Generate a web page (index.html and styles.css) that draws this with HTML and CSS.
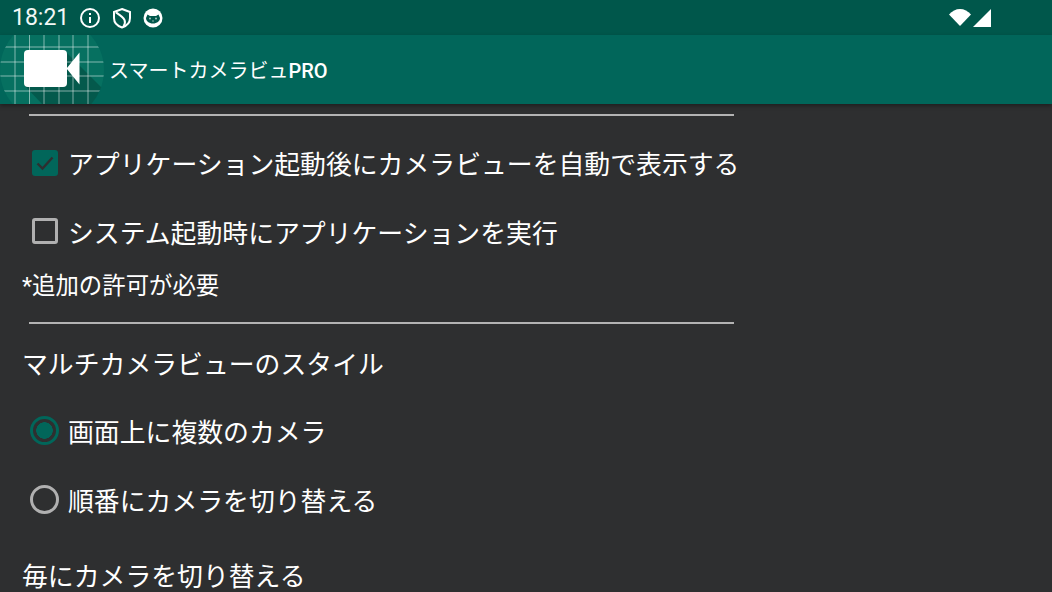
FILE: index.html
```html
<!DOCTYPE html>
<html lang="ja">
<head>
    <meta charset="UTF-8">
    <title>スマートカメラビュPRO</title>
    <link rel="stylesheet" href="styles.css">
</head>
<body>
    <div id="app">
        <!-- status bar -->
        <div class="status-bar">
            <span class="clock">18:21</span>
            <svg class="status-icon" viewBox="0 0 24 24"><circle cx="12" cy="12" r="9" fill="none" stroke="#fff" stroke-width="2"/><rect x="11" y="11" width="2" height="6" fill="#fff"/><rect x="11" y="7" width="2" height="2" fill="#fff"/></svg>
            <svg class="status-icon" viewBox="0 0 24 24"><path d="M12 3l8 3v6c0 4.500-3.400 8-8 9.500-4.600-1.500-8-5-8-9.500V6z" fill="none" stroke="#fff" stroke-width="2"/><path d="M6 6.500c3 2 7 4.500 8.500 7.500 1 2 .5 4-1 6.500" fill="none" stroke="#fff" stroke-width="2"/></svg>
            <svg class="status-icon" viewBox="0 0 24 24"><circle cx="12" cy="12" r="9.500" fill="#fff"/><path d="M5 12l1.500-3.500L9 10h6l2.500-1.500L19 12c0 3-3 5.500-7 5.500S5 15 5 12z" fill="#00574b"/><circle cx="9" cy="12.500" r="1" fill="#9fc4bc"/><circle cx="15" cy="12.500" r="1" fill="#9fc4bc"/><circle cx="12" cy="15" r=".8" fill="#9fc4bc"/></svg>
            <span class="status-spacer"></span>
            <svg class="wifi" viewBox="0 0 22 17"><path d="M0 5.500C3 2 7 0 11 0s8 2 11 5.500L11 17z" fill="#fff"/></svg>
            <svg class="signal" viewBox="0 0 18 18"><path d="M18 0v18H0z" fill="#fff"/></svg>
        </div>

        <!-- toolbar -->
        <div class="toolbar">
            <svg class="logo" viewBox="0 0 104 69">
                <defs>
                    <clipPath id="logo-clip"><circle cx="52" cy="35" r="52"/></clipPath>
                </defs>
                <g clip-path="url(#logo-clip)">
                    <rect width="104" height="69" fill="#067060"/>
                    <path d="M64 15l40 40v14H42L24 50z" fill="#000" opacity="0.2"/>
                    <g stroke="#fff" stroke-opacity="0.5" stroke-width="1">
                        <path d="M15 0v69M29.500 0v69M44 0v69M59 0v69M73 0v69M88 0v69"/>
                        <path d="M4 12h96M0 27h104M0 41h104M4 56h96"/>
                    </g>
                </g>
                <rect x="24" y="15" width="43" height="37" rx="4" fill="#fff"/>
                <path d="M66.500 33.500l13-16v32z" fill="#fff"/>
            </svg>
            <span class="toolbar-title">スマートカメラビュ<b>PRO</b></span>
        </div>

        <!-- settings -->
        <div class="content">
            <div class="divider first"></div>
            <label class="row">
                <span class="check on">
                    <svg viewBox="0 0 26 26"><path d="M5.500 13.500l5 5 10-11" fill="none" stroke="#2e2f30" stroke-width="2.400"/></svg>
                </span>
                <span>アプリケーション起動後にカメラビューを自動で表示する</span>
            </label>
            <label class="row">
                <span class="check"></span>
                <span>システム起動時にアプリケーションを実行</span>
            </label>
            <p class="note">*追加の許可が必要</p>
            <div class="divider"></div>
            <p class="heading">マルチカメラビューのスタイル</p>
            <label class="row">
                <span class="radio on"></span>
                <span>画面上に複数のカメラ</span>
            </label>
            <label class="row">
                <span class="radio"></span>
                <span>順番にカメラを切り替える</span>
            </label>
            <p class="heading last">毎にカメラを切り替える</p>
        </div>
    </div>
</body>
</html>
```

FILE: styles.css
```css
* {
    box-sizing: border-box;
    margin: 0;
    padding: 0;
}

html, body {
    height: 100%;
    overflow: hidden;
}

body {
    font-family: 'Roboto', 'Noto Sans CJK JP', sans-serif;
    background-color: #2e2f30;
    color: #fff;
}

#app {
    height: 592px;
    overflow: hidden;
    display: flex;
    flex-direction: column;
}

.status-bar {
    height: 35px;
    flex: none;
    display: flex;
    align-items: center;
    padding: 0 61px 0 12px;
    background-color: #00574b;
}

.clock {
    font-size: 23px;
    margin-right: 9px;
    color: #f2f7f6;
}

.status-icon {
    width: 24px;
    height: 24px;
    margin-right: 7.500px;
}

.status-spacer {
    flex: 1;
}

.wifi {
    width: 22px;
    height: 17px;
    margin-right: 2px;
}

.signal {
    width: 18px;
    height: 18px;
}

.toolbar {
    height: 69px;
    flex: none;
    display: flex;
    align-items: center;
    background-color: #01665a;
    box-shadow: 0 2px 4px rgba(0, 0, 0, 0.35);
    position: relative;
}

.logo {
    width: 104px;
    height: 69px;
    flex: none;
    margin-right: 5px;
}

.toolbar-title {
    font-size: 20px;
}

.toolbar-title b {
    font-weight: 500;
}

.content {
    flex: 1;
    padding-left: 23px;
    font-size: 25.850px;
}

.divider {
    width: 705px;
    height: 2px;
    margin-left: 6px;
    background-color: #b3b3b3;
}

.divider.first {
    margin-top: 10px;
}

.row {
    height: 68.500px;
    display: flex;
    align-items: center;
    padding-left: 9px;
    white-space: nowrap;
}

.row:first-of-type {
    margin-top: 12.500px;
}

.check {
    width: 26px;
    height: 26px;
    margin-right: 10px;
    flex: none;
    border: 3px solid #b0b0b0;
    border-radius: 3px;
}

.check.on {
    border: none;
    background-color: #01665a;
}

.check svg {
    display: block;
    width: 26px;
    height: 26px;
}

.radio {
    width: 29px;
    height: 29px;
    margin: 0 9px 0 -2px;
    flex: none;
    border: 3px solid #b0b0b0;
    border-radius: 50%;
}

.radio.on {
    border-color: #01665a;
    background: radial-gradient(circle, #01665a 0 8px, transparent 8.500px);
}

.note {
    font-size: 23.400px;
    line-height: 38px;
    margin-top: 1.500px;
    margin-left: -1px;
    margin-bottom: 17px;
}

.heading {
    line-height: 40px;
    margin-top: 21px;
    margin-bottom: 11.500px;
    margin-left: -1px;
}

.heading.last {
    margin-top: 23px;
}
```
